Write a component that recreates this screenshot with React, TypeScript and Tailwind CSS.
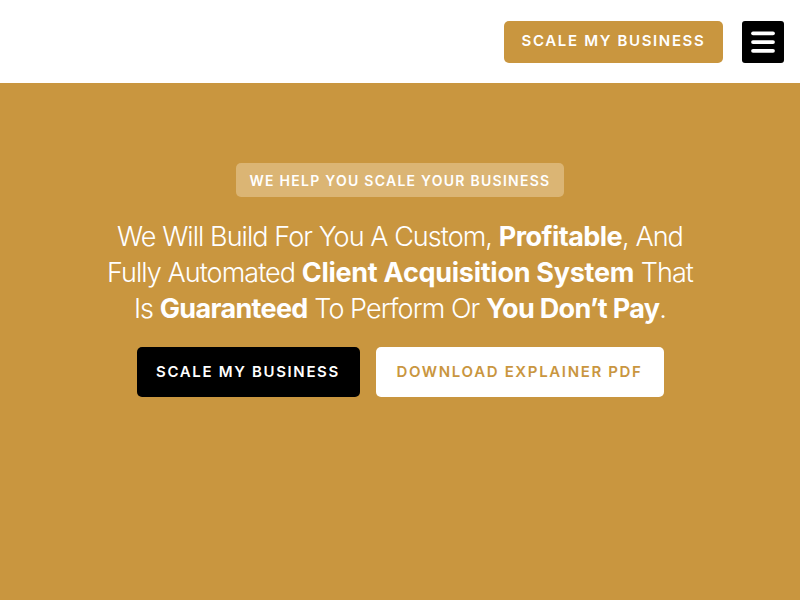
import { Menu } from 'lucide-react';

export default function App() {
  return (
    <div className="min-h-screen w-full bg-[#c9963f] font-['Inter',sans-serif]">
      {/* Header */}
      <header className="flex h-[83px] items-center justify-end gap-[19px] bg-white pr-[16px]">
        <button className="h-[42px] w-[219px] rounded-[5px] bg-[#c9963f] text-[15px] font-semibold tracking-[0.11em] text-white">
          SCALE MY BUSINESS
        </button>
        <button className="flex h-[42px] w-[42px] items-center justify-center rounded-[3px] bg-black">
          <Menu className="h-[30px] w-[30px] text-white" strokeWidth={3} />
        </button>
      </header>

      {/* Hero */}
      <section className="flex flex-col items-center pt-[80px]">
        <div className="flex h-[34px] items-center rounded-[5px] bg-[#dbb574] px-[14px] text-[14px] font-semibold tracking-[0.09em] text-white">
          WE HELP YOU SCALE YOUR BUSINESS
        </div>
        <h1 className="mt-[22px] text-center text-[27px] font-light leading-[36px] tracking-[-0.035em] text-white">
          We Will Build For You A Custom, <span className="font-bold tracking-[-0.02em]">Profitable</span>, And
          <br />
          Fully Automated <span className="font-bold tracking-[-0.01em]">Client Acquisition System</span> That
          <br />
          Is <span className="font-bold tracking-[-0.025em]">Guaranteed</span> To Perform Or{' '}
          <span className="font-bold tracking-[-0.025em]">You Don’t Pay</span>.
        </h1>
        <div className="mt-[20px] flex gap-[16px]">
          <button className="h-[50px] w-[223px] rounded-[5px] bg-black text-[15px] font-semibold tracking-[0.11em] text-white">
            SCALE MY BUSINESS
          </button>
          <button className="h-[50px] w-[288px] rounded-[5px] bg-white text-[15px] font-semibold tracking-[0.11em] text-[#c9963f]">
            DOWNLOAD EXPLAINER PDF
          </button>
        </div>
      </section>
    </div>
  );
}
